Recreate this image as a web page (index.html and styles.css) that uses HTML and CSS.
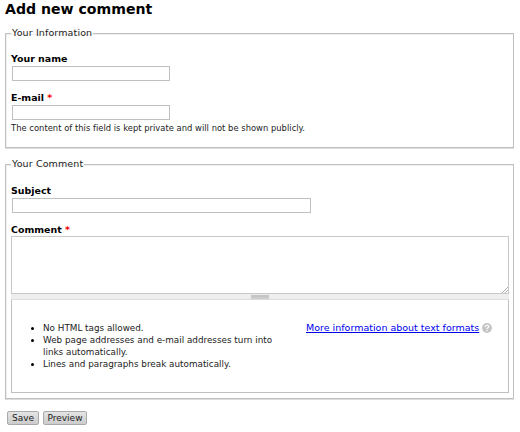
FILE: index.html
```html
<!DOCTYPE html>
<html lang="en">
<head>
<meta charset="utf-8">
<title>Add new comment</title>
<link rel="stylesheet" href="styles.css">
</head>
<body>
<h2 class="title">Add new comment</h2>
<form class="comment-form">
  <fieldset class="group group-info">
    <legend>Your Information</legend>
    <label for="name">Your name</label>
    <input class="field" id="name" type="text">
    <label class="label-mail" for="mail">E-mail <span class="required">*</span></label>
    <input class="field" id="mail" type="text">
    <p class="description">The content of this field is kept private and will not be shown publicly.</p>
  </fieldset>
  <fieldset class="group group-comment">
    <legend>Your Comment</legend>
    <label for="subject">Subject</label>
    <input class="field field-wide" id="subject" type="text">
    <label class="label-comment" for="comment">Comment <span class="required">*</span></label>
    <div class="textarea-wrap">
      <textarea id="comment"></textarea>
      <svg class="corner" viewBox="0 0 6 6" width="6" height="6"><path d="M0 6 6 0M3 6 6 3" stroke="#999" stroke-width=".8"/></svg>
    </div>
    <div class="grippie"><span class="grip"></span></div>
    <div class="format">
      <ul class="tips">
        <li>No HTML tags allowed.</li>
        <li>Web page addresses and e-mail addresses turn into<br>links automatically.</li>
        <li>Lines and paragraphs break automatically.</li>
      </ul>
      <div class="help">
        <a href="#">More information about text formats</a>
        <svg viewBox="0 0 10 10" width="10" height="10"><circle cx="5" cy="5" r="4.9" fill="#c4c4c4"/><path d="M3.3 3.9C3.3 1.7 6.7 1.7 6.7 3.7 6.7 4.8 5 4.9 5 6.2M5 7.1V8.2" fill="none" stroke="#fff" stroke-width="1.2"/></svg>
      </div>
    </div>
  </fieldset>
  <div class="actions">
    <button class="save" type="button">Save</button>
    <button class="preview" type="button">Preview</button>
  </div>
</form>
</body>
</html>
```

FILE: styles.css
```css
* { box-sizing: border-box; }
body {
  margin: 0;
  padding: 0 5px;
  width: 520px;
  height: 432px;
  overflow: hidden;
  background: #fff;
  color: #222;
  font: 9.5px/12px "DejaVu Sans", sans-serif;
}
.title {
  margin: 0;
  padding-top: 1px;
  height: 27px;
  color: #000;
  font-size: 14.1px;
  line-height: 17px;
}
.group {
  margin: 0;
  width: 509px;
  padding: 0 4px 0 5px;
  border: 1px solid #c0c0c0;
  box-shadow: inset 1px 1px #eee, 0 1px #ddd;
}
.group-info { height: 121px; }
.group-comment { height: 241px; margin-top: 10px; }
legend { padding: 0 1px; height: 12px; line-height: 12px; letter-spacing: .12px; }
label {
  display: block;
  margin-top: 14px;
  height: 13px;
  line-height: 13px;
  color: #000;
  font-size: 9.45px;
  font-weight: bold;
}
.group-info label:first-of-type { margin-top: 13px; }
.required { color: #e00; }
.field {
  display: block;
  width: 158px;
  height: 15px;
  margin: 1px 0 0 1px;
  padding: 0 2px;
  border: 1px solid #c0c0c0;
  background: #fff;
}
.field-wide { width: 299px; }
.group .label-mail { margin-top: 10px; }
.label-comment { margin-top: 10px; }
.description { margin: 2px 0 0; font-size: 8.4px; line-height: 12px; letter-spacing: .015px; white-space: nowrap; }
.textarea-wrap { position: relative; height: 58px; }
textarea {
  display: block;
  width: 498px;
  height: 58px;
  resize: none;
  border: 1px solid #c8c8c8;
}
.corner { position: absolute; right: 1px; bottom: 1px; }
.grippie {
  display: flex;
  justify-content: center;
  width: 498px;
  height: 6px;
  padding-top: 1px;
  background: #eee;
  border-bottom: 1px solid #ddd;
}
.grip {
  width: 18px;
  height: 4px;
  background: linear-gradient(#c4c4c4 50%, #ccc 50%);
}
.format {
  display: flex;
  width: 498px;
  height: 93px;
  padding-top: 22px;
  border: 1px solid #c0c0c0;
  border-top: 0;
}
.tips {
  width: 294px;
  margin: 0;
  padding-left: 31px;
  font-size: 8.82px;
  white-space: nowrap;
}
.tips li::marker { color: #000; }
.help { display: flex; height: 12px; align-items: center; gap: 3px; white-space: nowrap; }
.help a { color: #00e; }
.actions { display: flex; gap: 4px; margin: 12px 0 0 2px; }
button {
  height: 14px;
  padding: 0;
  border: 1px solid #aaa;
  border-radius: 2px;
  background: linear-gradient(#e4e4e4, #ccc);
  color: #222;
  font: 9px/11px "DejaVu Sans", sans-serif;
}
.save { width: 32px; }
.preview { width: 44px; }
```
